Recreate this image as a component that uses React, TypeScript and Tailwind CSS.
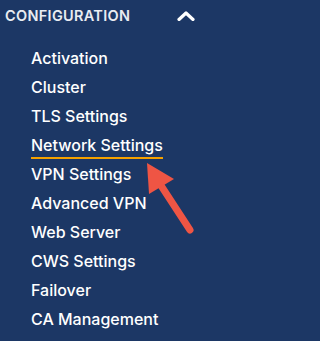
import React from "react"

const items = [
  "Activation",
  "Cluster",
  "TLS Settings",
  "Network Settings",
  "VPN Settings",
  "Advanced VPN",
  "Web Server",
  "CWS Settings",
  "Failover",
  "CA Management"
]

const App = () => {
  return (
    <div
      className="relative w-full min-w-[209px] h-[341px] overflow-hidden bg-[#1c3765]"
      style={{ fontFamily: "Inter, 'Noto Sans', sans-serif" }}
    >
      <div className="w-[209px]">
        <div className="flex items-center justify-between h-[31px] pl-[5px] pr-[14px]">
          <span className="text-[14.5px] font-semibold tracking-[0.3px] text-[#e9ecf2]">
            CONFIGURATION
          </span>
          <svg width="18" height="10" viewBox="0 0 18 10">
            <path
              d="M2 8.5 L9 2 L16 8.5"
              fill="none"
              stroke="#ffffff"
              strokeWidth="3.2"
              strokeLinecap="round"
              strokeLinejoin="round"
            />
          </svg>
        </div>
        <ul className="flex flex-col pl-[31px] pt-[13px]">
          {items.map((item) => (
            <li
              key={item}
              className="text-[16px] leading-[29px] font-[550] text-white"
            >
              {item === "Network Settings" ? (
                <span className="inline-block leading-[24px] border-b-2 border-[#f5a100]">
                  {item}
                </span>
              ) : (
                item
              )}
            </li>
          ))}
        </ul>
      </div>
      <svg
        className="absolute left-0 top-0"
        width="209"
        height="341"
        viewBox="0 0 209 341"
      >
        <line
          x1="190"
          y1="230"
          x2="160"
          y2="184"
          stroke="#ef5544"
          strokeWidth="7"
          strokeLinecap="round"
        />
        <polygon points="147,163 174,179 149,194" fill="#ef5544" />
      </svg>
    </div>
  )
}

export default App
